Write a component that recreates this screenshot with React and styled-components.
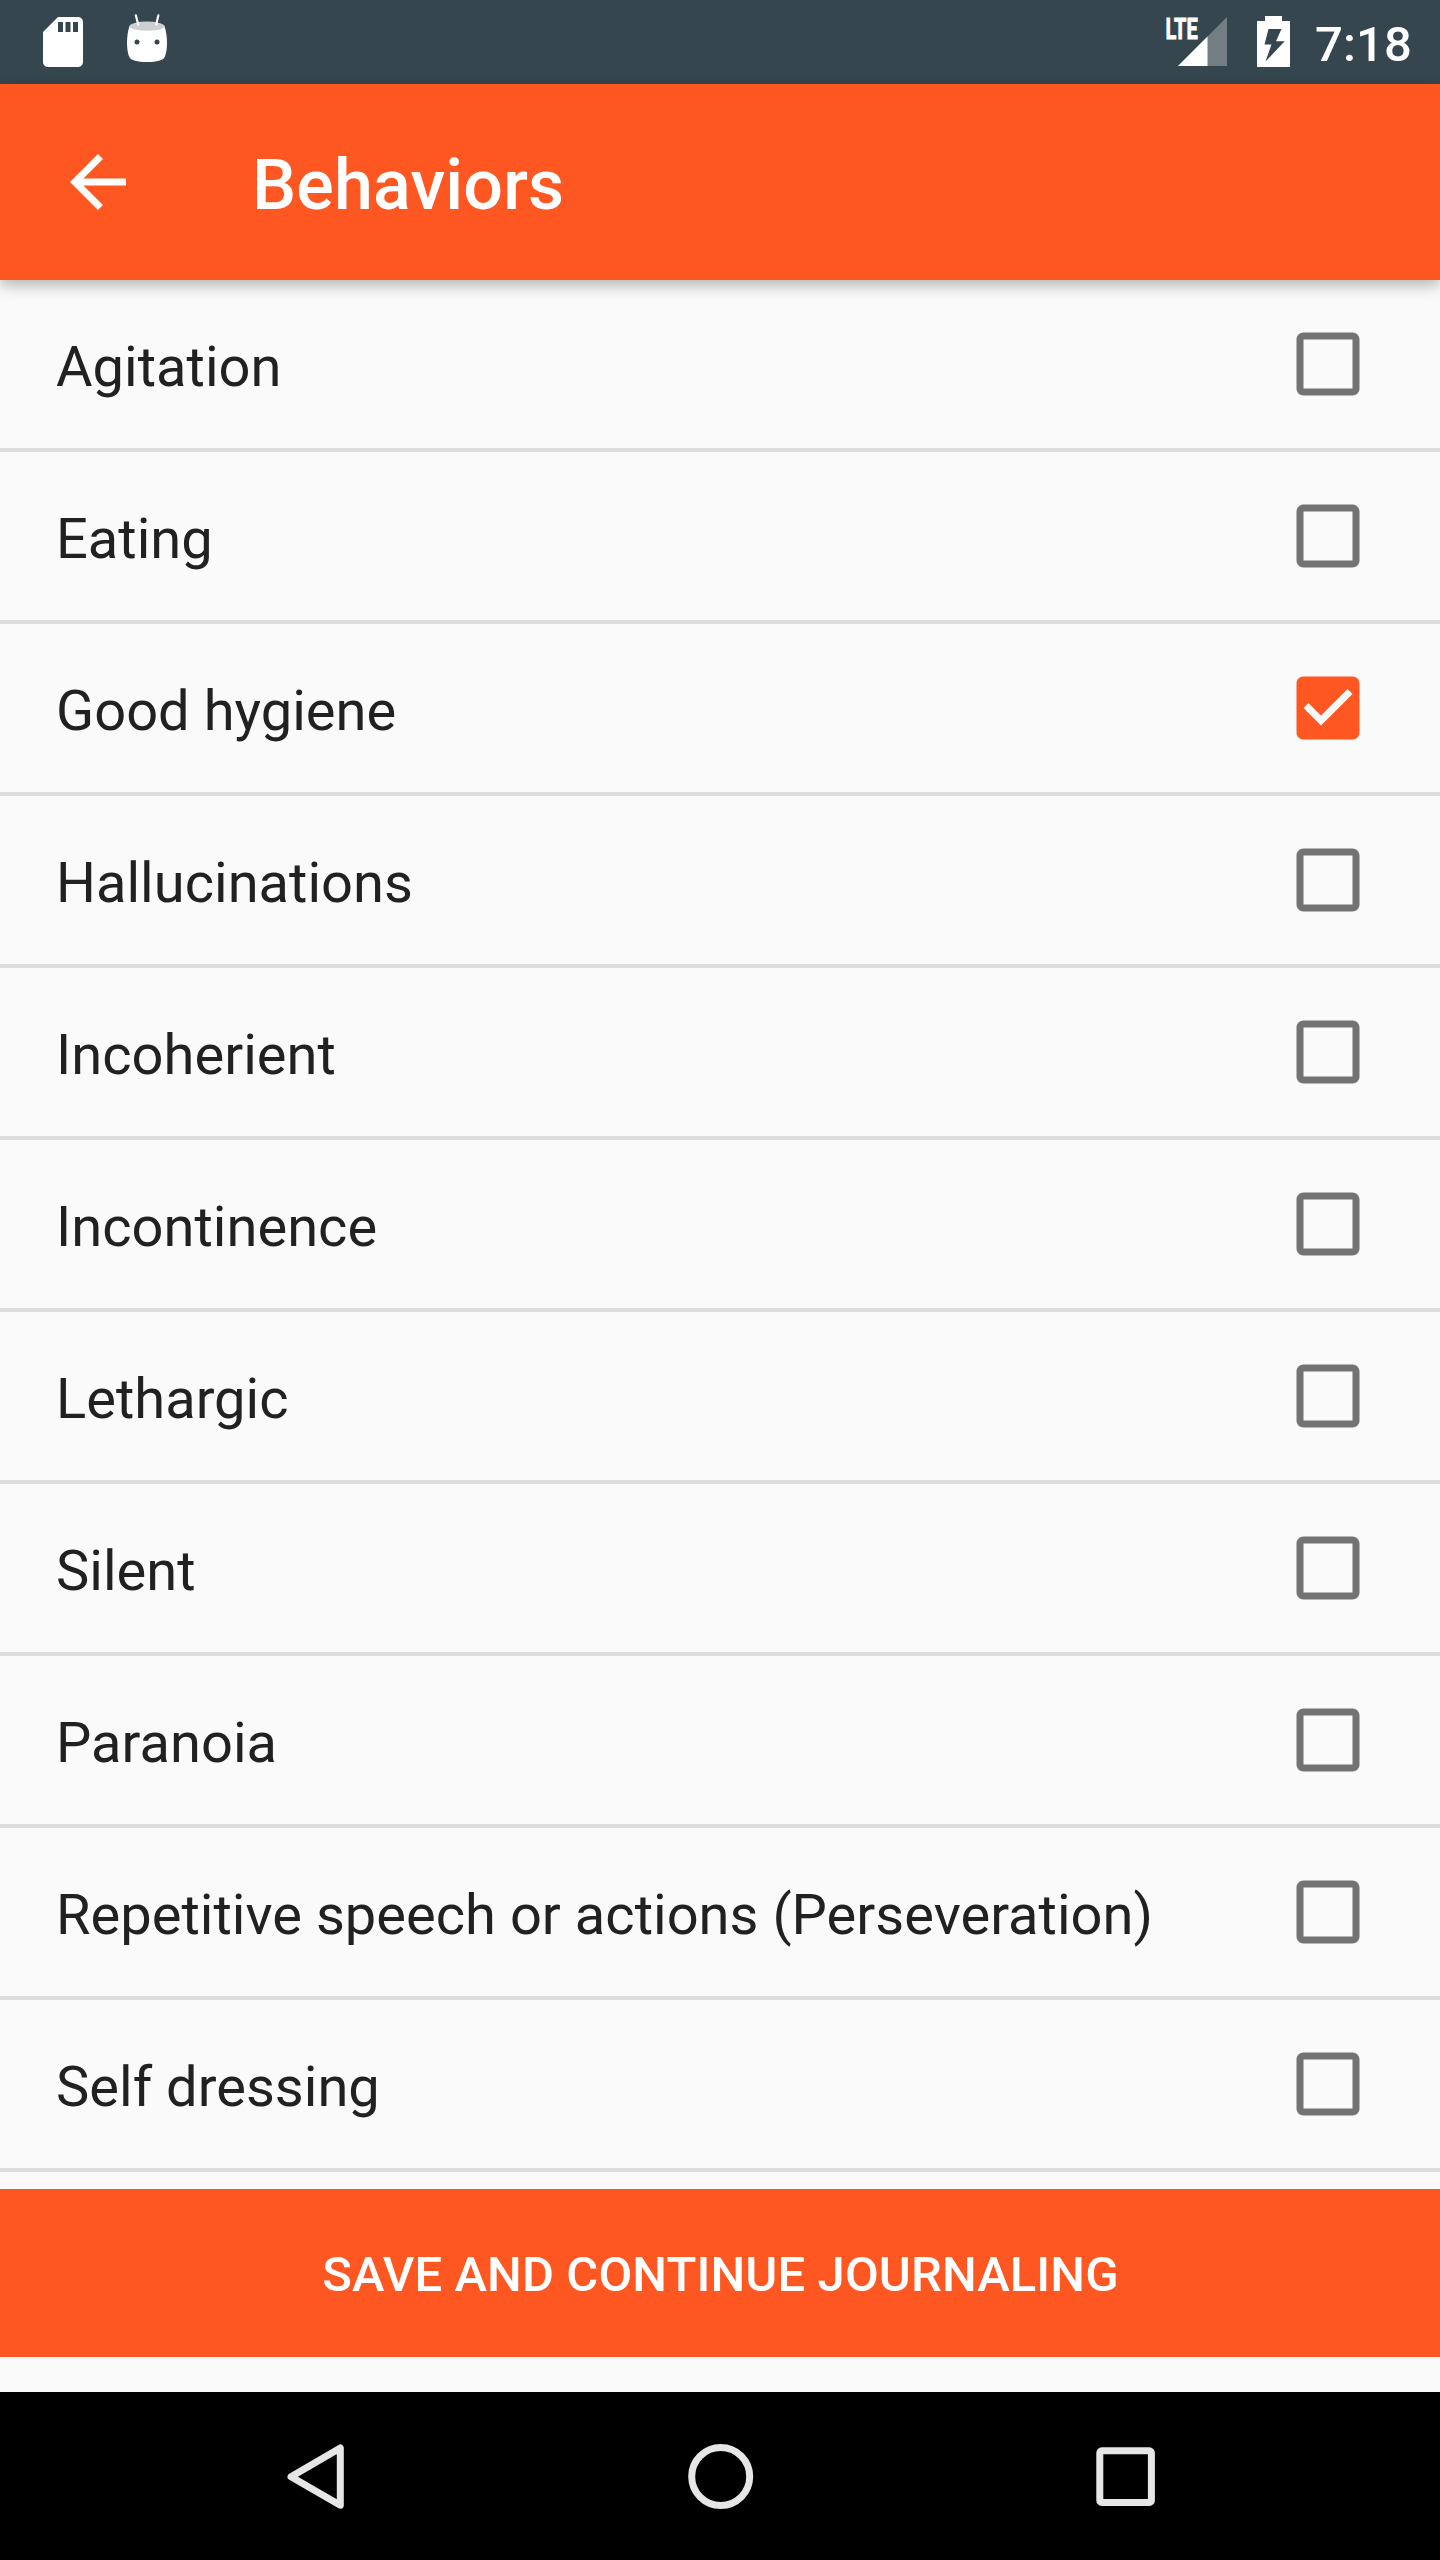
import React, { useState } from "react";
import styled, { createGlobalStyle } from "styled-components";

const GlobalStyle = createGlobalStyle`
  html, body { margin: 0; padding: 0; background: #fafafa; }
  *, *::before, *::after { box-sizing: border-box; }
`;

const Screen = styled.div`
  width: 1440px;
  height: 2560px;
  display: flex;
  flex-direction: column;
  overflow: hidden;
  background: #fafafa;
  color: #212121;
  font-family: Roboto, "Noto Sans", sans-serif;
`;

const StatusBar = styled.div`
  flex: none;
  height: 84px;
  padding: 0 28px 0 33px;
  display: flex;
  align-items: center;
  justify-content: space-between;
  background: #35464e;
  color: #fff;
`;

const StatusGroup = styled.div`
  display: flex;
  align-items: center;
  height: 84px;
`;

const Glyph = styled.svg`
  display: block;
  flex: none;
  width: ${(p) => p.$w}px;
  height: ${(p) => p.$h}px;
  margin-left: ${(p) => p.$gap || 0}px;
`;

const Clock = styled.time`
  width: 97px;
  margin-left: 25px;
  padding-top: 5px;
  font-size: 49px;
  font-weight: 500;
  line-height: 58px;
  letter-spacing: 0.15px;
  white-space: nowrap;
`;

const AppBar = styled.header`
  position: relative;
  z-index: 1;
  flex: none;
  height: 196px;
  padding-left: 56px;
  display: flex;
  align-items: center;
  background: #ff5722;
  color: #fff;
  box-shadow: 0 5px 14px rgba(0, 0, 0, 0.29);
`;

const IconButton = styled.button`
  width: 84px;
  height: 84px;
  padding: 0;
  border: 0;
  background: none;
  color: inherit;
`;

const Title = styled.h1`
  margin: 6px 0 0 112px;
  font-size: 70px;
  font-weight: 500;
  line-height: 82px;
  letter-spacing: 0.15px;
`;

const List = styled.ul`
  flex: 1;
  min-height: 0;
  margin: 0;
  padding: 0;
  overflow: hidden;
  list-style: none;
`;

const Row = styled.li`
  height: 172px;
  padding: 0 70px 0 56px;
  display: flex;
  align-items: center;
  justify-content: space-between;
  border-bottom: 4px solid #dcdcdc;
`;

const Label = styled.span`
  padding-top: 6px;
  font-size: 56px;
  line-height: 66px;
  letter-spacing: 0.03px;
  white-space: nowrap;
`;

const CheckButton = styled(IconButton)`
  color: ${(p) => (p.$checked ? "#ff5722" : "#737373")};
`;

const SaveButton = styled.button`
  flex: none;
  height: 168px;
  margin: 0 0 35px;
  padding: 4px 0 0 1px;
  border: 0;
  background: #ff5722;
  color: #fff;
  font: 500 49px/58px Roboto, "Noto Sans", sans-serif;
  letter-spacing: 0.11px;
  text-transform: uppercase;
`;

const NavBar = styled.nav`
  flex: none;
  height: 168px;
  padding: 0 273px 0 274px;
  display: flex;
  align-items: center;
  justify-content: space-between;
  background: #000;
`;

const NavIcon = styled.svg`
  display: block;
  width: 84px;
  height: 84px;
  fill: none;
  stroke: #e6e6e6;
  stroke-width: 7;
  stroke-linejoin: round;
`;

const BOX =
  "M19 5v14H5V5h14m0-2H5c-1.1 0-2 .9-2 2v14c0 1.1.9 2 2 2h14c1.1 0 2-.9 2-2V5c0-1.1-.9-2-2-2z";
const BOX_CHECKED =
  "M19 3H5c-1.11 0-2 .9-2 2v14c0 1.1.89 2 2 2h14c1.11 0 2-.9 2-2V5c0-1.1-.89-2-2-2zm-9 14l-5-5 1.41-1.41L10 14.17l7.59-7.59L19 8l-9 9z";

const BEHAVIORS = [
  "Agitation",
  "Eating",
  "Good hygiene",
  "Hallucinations",
  "Incoherient",
  "Incontinence",
  "Lethargic",
  "Silent",
  "Paranoia",
  "Repetitive speech or actions (Perseveration)",
  "Self dressing",
];

function SdCard() {
  return (
    <Glyph $w={60} $h={60} viewBox="0 0 24 24" fill="#fff">
      <path d="M18 2h-8L4.02 8 4 20c0 1.1.9 2 2 2h12c1.1 0 2-.9 2-2V4c0-1.1-.9-2-2-2zm-6 6h-2V4h2v4zm3 0h-2V4h2v4zm3 0h-2V4h2v4z" />
    </Glyph>
  );
}

function DroidHead() {
  return (
    <Glyph $w={40} $h={84} $gap={34} viewBox="127 0 40 84">
      <path
        d="M129.5 26C127.8 31 127 37 127 43C127 49 128 54 129.3 57C131 60.5 137 62 147 62C157 62 163 60.5 164.7 57C166 54 167 49 167 43C167 37 166.200 31 164.500 26Z"
        fill="#fff"
      />
      <ellipse cx="147" cy="26.200" rx="17.500" ry="4.600" fill="#cdd0d1" />
      <path d="M135.800 15.300L138.200 24.500M158.400 15.300L156.200 24.500" stroke="#fff" strokeWidth="2.200" strokeLinecap="round" />
      <circle cx="137" cy="42" r="2.500" fill="#35464e" />
      <circle cx="157" cy="42" r="2.500" fill="#35464e" />
    </Glyph>
  );
}

function Signal() {
  return (
    <Glyph $w={62} $h={84} viewBox="1166 0 62 84">
      <path d="M1227 17V66H1178Z" fill="#727e83" />
      <path d="M1207.500 36.500V66H1178Z" fill="#fff" />
      <text
        x="1165.500"
        y="38.800"
        fill="#fff"
        stroke="#fff"
        strokeWidth="0.900"
        fontFamily="Roboto, sans-serif"
        fontWeight="700"
        fontSize="29"
        textLength="32.300"
        lengthAdjust="spacingAndGlyphs"
      >
        LTE
      </text>
    </Glyph>
  );
}

function Battery() {
  return (
    <Glyph $w={33} $h={84} $gap={29} viewBox="1257 0 33 84">
      <path
        fillRule="evenodd"
        fill="#fff"
        d="M1265 16H1282V21H1290V67H1257V21H1265ZM1268.500 29L1264.500 44.500H1271.500L1265.500 61.500L1284.700 41.300H1276L1281.500 29Z"
      />
    </Glyph>
  );
}

export default function App() {
  const [selected, setSelected] = useState(["Good hygiene"]);
  const toggle = (name) =>
    setSelected((s) => (s.includes(name) ? s.filter((n) => n !== name) : [...s, name]));

  return (
    <Screen>
      <GlobalStyle />
      <StatusBar>
        <StatusGroup>
          <SdCard />
          <DroidHead />
        </StatusGroup>
        <StatusGroup>
          <Signal />
          <Battery />
          <Clock>7:18</Clock>
        </StatusGroup>
      </StatusBar>
      <AppBar>
        <IconButton>
          <Glyph $w={84} $h={84} viewBox="0 0 24 24" fill="currentColor">
            <path d="M20 11H7.83l5.59-5.59L12 4l-8 8 8 8 1.41-1.41L7.83 13H20v-2z" />
          </Glyph>
        </IconButton>
        <Title>Behaviors</Title>
      </AppBar>
      <List>
        {BEHAVIORS.map((name) => {
          const checked = selected.includes(name);
          return (
            <Row key={name}>
              <Label>{name}</Label>
              <CheckButton $checked={checked} onClick={() => toggle(name)}>
                <Glyph $w={84} $h={84} viewBox="0 0 24 24" fill="currentColor">
                  <path d={checked ? BOX_CHECKED : BOX} />
                </Glyph>
              </CheckButton>
            </Row>
          );
        })}
      </List>
      <SaveButton>Save and continue journaling</SaveButton>
      <NavBar>
        <NavIcon viewBox="274 2434 84 84">
          <path d="M340.300 2448V2505.300L291 2476.700Z" />
        </NavIcon>
        <NavIcon viewBox="678.500 2434 84 84">
          <circle cx="720.200" cy="2476.500" r="29" />
        </NavIcon>
        <NavIcon viewBox="1083 2434 84 84">
          <rect x="1099.800" y="2450.800" width="51.600" height="51.600" rx="2" />
        </NavIcon>
      </NavBar>
    </Screen>
  );
}
